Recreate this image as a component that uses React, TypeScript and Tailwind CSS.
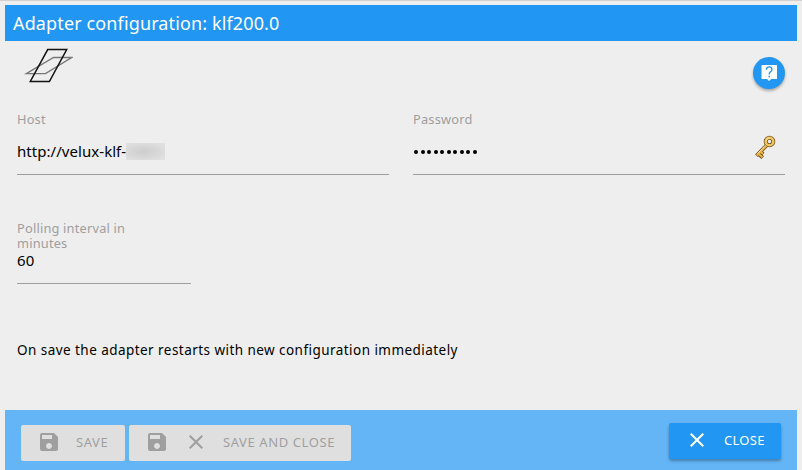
import type { ReactNode } from "react";
import { MdClose, MdSave } from "react-icons/md";

function AdapterLogo() {
  return (
    <svg className="block h-[36px] w-[50px]" viewBox="0 0 50 36" fill="none">
      <path d="M3.3 25.6H22.5L48.6 9.5H30.5Z" stroke="#777777" strokeWidth="1.3" />
      <path d="M7.3 33.5H26.4L43.7 1.6H24.7Z" stroke="#111111" strokeWidth="1.5" />
    </svg>
  );
}

function HelpIcon() {
  return (
    <svg className="block size-[20px]" viewBox="0 0 20 20" fill="none">
      <path d="M3 2h14.5q.5 0 .5.5v13q0 .5-.5.5h-5.3L10 18l-2-2H3q-.5 0-.5-.5v-13Q2.500 2 3 2Z" fill="white" />
      <path d="M7.4 6.8C7.400 3 12.9 3 12.9 6.400C12.900 8.800 10.100 8.700 10.100 11.400" stroke="#2196f3" strokeWidth="1.4" />
      <path d="M9.400 12.700h1.500v1.500H9.400Z" fill="#2196f3" />
    </svg>
  );
}

function KeyIcon() {
  return (
    <svg className="block h-[26px] w-[22px]" viewBox="0 0 22 26" fill="none">
      <path d="M12.500 10.500 2.500 20.800M4.500 18.800l4.200 3.800M6.800 16.800l2.400 2.300" stroke="#6e4a1e" strokeWidth="3.800" />
      <circle cx="15.500" cy="6.500" r="3.800" stroke="#795326" strokeWidth="4" />
      <path d="M12.500 10.500 2.800 20.500M4.500 18.800l3.900 3.500M6.800 16.800l2.100 2" stroke="#e7b345" strokeWidth="2.200" />
      <circle cx="15.500" cy="6.500" r="3.800" stroke="#edc45e" strokeWidth="2.500" />
      <path d="M11 10.800 3.500 18.600M12.400 5.500q.8-2.400 3.200-2.500" stroke="#ffe7a0" strokeWidth=".9" />
    </svg>
  );
}

function Label({ children }: { children: ReactNode }) {
  return (
    <div className="whitespace-nowrap font-['Noto_Sans',sans-serif] text-[12.8px] leading-[15px] tracking-[0.2px] text-[#9e9e9e]">
      {children}
    </div>
  );
}

export default function App() {
  return (
    <div className="flex h-[470px] w-[802px] flex-col overflow-hidden border-t-[1px] border-[#d1d1d1] bg-[#eeeeee] px-[5px] pt-[4px] font-['Noto_Sans',sans-serif] text-black">
      <header className="flex h-[36px] shrink-0 items-center bg-[#2196f3] pl-[8px] text-white">
        <h1 className="whitespace-nowrap text-[18px] leading-[24px] tracking-[0.13px]">Adapter configuration: klf200.0</h1>
      </header>

      <main className="flex h-[369px] shrink-0 flex-col px-[12px]">
        <div className="flex h-[71px] justify-between">
          <div className="pl-[6px] pt-[7px]"><AdapterLogo /></div>
          <button className="mt-[16px] flex size-[32px] items-center justify-center rounded-full bg-[#2196f3] text-white shadow-[0_2px_3px_rgba(0,0,0,0.3)]">
            <HelpIcon />
          </button>
        </div>

        <div className="flex h-[109px] gap-[24px]">
          <div className="h-[63px] w-[372px] border-b border-[#9e9e9e]">
            <Label>Host</Label>
            <div className="mt-[13px] flex h-[22px] items-center text-[15px]">
              <span className="w-[109px] whitespace-nowrap tracking-[0.05px]">http://velux-klf-</span>
              <span className="h-[17px] w-[39px] bg-[radial-gradient(ellipse_at_45%_50%,#cdcdcd,#e2e3e2)]" />
            </div>
          </div>
          <div className="flex h-[63px] w-[372px] justify-between border-b border-[#9e9e9e]">
            <div>
              <Label>Password</Label>
              <div className="mt-[23px] flex h-[4px] gap-[2.5px] pl-[1px]">
                {Array.from({ length: 10 }, (_, i) => (
                  <span key={i} className="size-[4px] rounded-full bg-black" />
                ))}
              </div>
            </div>
            <div className="mr-[9px] mt-[23px]"><KeyIcon /></div>
          </div>
        </div>

        <div className="h-[63px] w-[174px] border-b border-[#9e9e9e]">
          <Label>Polling interval in<br />minutes</Label>
          <div className="text-[15px] leading-[18px] tracking-[0.2px]">60</div>
        </div>
        <p className="mt-[56px] whitespace-nowrap text-[13.5px] leading-[20px] tracking-[0.45px]">On save the adapter restarts with new configuration immediately</p>
      </main>

      <footer className="flex h-[60px] shrink-0 items-start justify-between bg-[#64b5f6] px-[16px] pt-[13px] text-[13px] tracking-[0.6px]">
        <div className="mt-[2px] flex gap-[4px] text-[#9f9f9f]">
          <button className="flex h-[36px] w-[104px] items-center rounded-[2px] bg-[#dfdfdf] pb-[2px] pl-[16px]">
            <MdSave size={24} />
            <span className="ml-[15px] whitespace-nowrap pt-[1px]">SAVE</span>
          </button>
          <button className="flex h-[36px] w-[222px] items-center rounded-[2px] bg-[#dfdfdf] pb-[2px] pl-[16px]">
            <MdSave size={24} />
            <MdClose size={24} className="ml-[15px]" />
            <span className="ml-[15px] whitespace-nowrap pt-[1px]">SAVE AND CLOSE</span>
          </button>
        </div>
        <button className="flex h-[36px] w-[112px] items-center rounded-[2px] bg-[#2196f3] pb-[2px] pl-[16px] text-white shadow-[0_2px_3px_rgba(0,0,0,0.3)]">
          <MdClose size={24} />
          <span className="ml-[15px] whitespace-nowrap pt-[2px] tracking-[0.3px]">CLOSE</span>
        </button>
      </footer>
    </div>
  );
}
